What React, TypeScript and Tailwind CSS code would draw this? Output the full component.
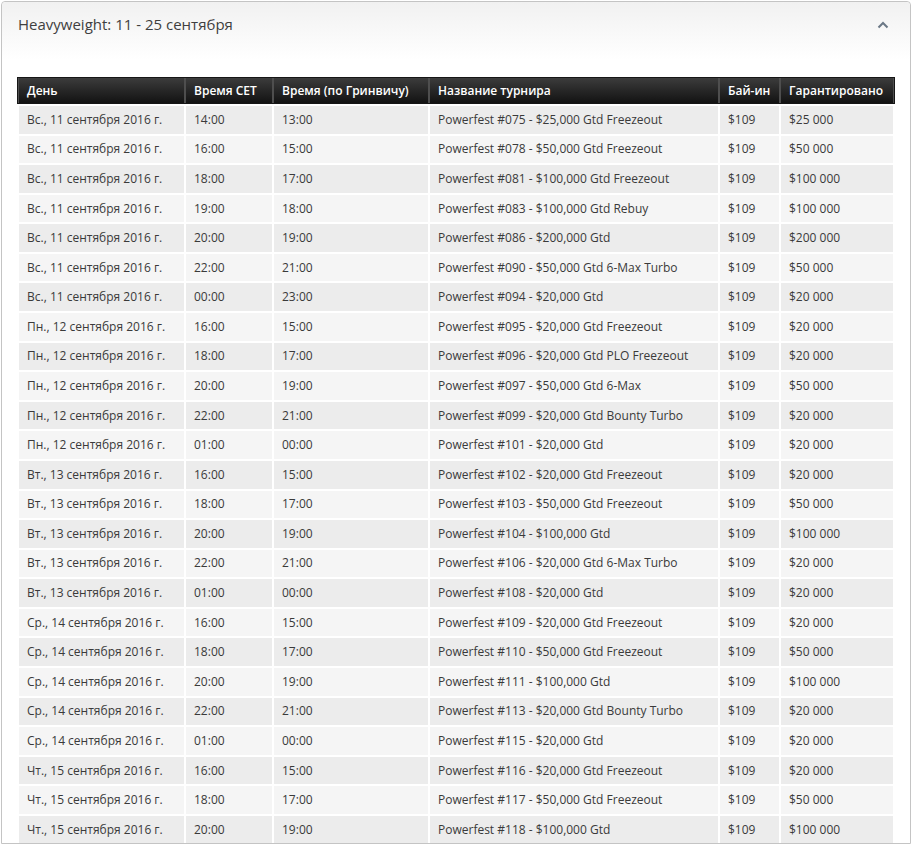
import React from "react";

const rows: [string, string, string, string, string][] = [
  ["Вс., 11 сентября 2016 г.", "14:00", "13:00", "Powerfest #075 - $25,000 Gtd Freezeout", "$25 000"],
  ["Вс., 11 сентября 2016 г.", "16:00", "15:00", "Powerfest #078 - $50,000 Gtd Freezeout", "$50 000"],
  ["Вс., 11 сентября 2016 г.", "18:00", "17:00", "Powerfest #081 - $100,000 Gtd Freezeout", "$100 000"],
  ["Вс., 11 сентября 2016 г.", "19:00", "18:00", "Powerfest #083 - $100,000 Gtd Rebuy", "$100 000"],
  ["Вс., 11 сентября 2016 г.", "20:00", "19:00", "Powerfest #086 - $200,000 Gtd", "$200 000"],
  ["Вс., 11 сентября 2016 г.", "22:00", "21:00", "Powerfest #090 - $50,000 Gtd 6-Max Turbo", "$50 000"],
  ["Вс., 11 сентября 2016 г.", "00:00", "23:00", "Powerfest #094 - $20,000 Gtd", "$20 000"],
  ["Пн., 12 сентября 2016 г.", "16:00", "15:00", "Powerfest #095 - $20,000 Gtd Freezeout", "$20 000"],
  ["Пн., 12 сентября 2016 г.", "18:00", "17:00", "Powerfest #096 - $20,000 Gtd PLO Freezeout", "$20 000"],
  ["Пн., 12 сентября 2016 г.", "20:00", "19:00", "Powerfest #097 - $50,000 Gtd 6-Max", "$50 000"],
  ["Пн., 12 сентября 2016 г.", "22:00", "21:00", "Powerfest #099 - $20,000 Gtd Bounty Turbo", "$20 000"],
  ["Пн., 12 сентября 2016 г.", "01:00", "00:00", "Powerfest #101 - $20,000 Gtd", "$20 000"],
  ["Вт., 13 сентября 2016 г.", "16:00", "15:00", "Powerfest #102 - $20,000 Gtd Freezeout", "$20 000"],
  ["Вт., 13 сентября 2016 г.", "18:00", "17:00", "Powerfest #103 - $50,000 Gtd Freezeout", "$50 000"],
  ["Вт., 13 сентября 2016 г.", "20:00", "19:00", "Powerfest #104 - $100,000 Gtd", "$100 000"],
  ["Вт., 13 сентября 2016 г.", "22:00", "21:00", "Powerfest #106 - $20,000 Gtd 6-Max Turbo", "$20 000"],
  ["Вт., 13 сентября 2016 г.", "01:00", "00:00", "Powerfest #108 - $20,000 Gtd", "$20 000"],
  ["Ср., 14 сентября 2016 г.", "16:00", "15:00", "Powerfest #109 - $20,000 Gtd Freezeout", "$20 000"],
  ["Ср., 14 сентября 2016 г.", "18:00", "17:00", "Powerfest #110 - $50,000 Gtd Freezeout", "$50 000"],
  ["Ср., 14 сентября 2016 г.", "20:00", "19:00", "Powerfest #111 - $100,000 Gtd", "$100 000"],
  ["Ср., 14 сентября 2016 г.", "22:00", "21:00", "Powerfest #113 - $20,000 Gtd Bounty Turbo", "$20 000"],
  ["Ср., 14 сентября 2016 г.", "01:00", "00:00", "Powerfest #115 - $20,000 Gtd", "$20 000"],
  ["Чт., 15 сентября 2016 г.", "16:00", "15:00", "Powerfest #116 - $20,000 Gtd Freezeout", "$20 000"],
  ["Чт., 15 сентября 2016 г.", "18:00", "17:00", "Powerfest #117 - $50,000 Gtd Freezeout", "$50 000"],
  ["Чт., 15 сентября 2016 г.", "20:00", "19:00", "Powerfest #118 - $100,000 Gtd", "$100 000"],
];

const headers = ["День", "Время CET", "Время (по Гринвичу)", "Название турнира", "Бай-ин", "Гарантировано"];
const cols = "grid grid-cols-[165px_86px_154px_288px_59px_112px] gap-x-[2px]";

export default function App() {
  return (
    <div className="bg-white min-h-screen p-[1px]" style={{ fontFamily: '"Open Sans", "DejaVu Sans", sans-serif' }}>
      <div className="border border-[#c4c4c4] rounded-t-[4px] bg-white">
        <div className="h-[58px] bg-gradient-to-b from-[#f1f1f1] to-white rounded-t-[4px] flex items-start justify-between pl-[16px] pr-[21px] pt-[11px]">
          <div className="text-[15px] text-[#3f3f3f] leading-[22px]">Heavyweight: 11 - 25 сентября</div>
          <svg width="12" height="8" viewBox="0 0 12 8" className="mt-[8px]">
            <polyline points="1.5,6.5 6,2 10.5,6.5" fill="none" stroke="#6b7886" strokeWidth="2" />
          </svg>
        </div>
        <div className="pl-[15px] pr-[14px] pt-[17px]">
          <div className="w-[878px]">
            <div className={`${cols} bg-[#4e4e4e] border border-[#161616] h-[27px] px-[1px]`}>
              {headers.map((h, i) => (
                <div
                  key={i}
                  className="bg-gradient-to-b from-[#3c3c3c] to-[#131313] text-white font-semibold text-[12px] flex items-center pl-[8px] whitespace-nowrap"
                >
                  {h}
                </div>
              ))}
            </div>
            <div className="px-[2px] pt-[2px] flex flex-col gap-y-[2px]">
              {rows.map((r, i) => (
                <div key={i} className={`${cols} h-[27.58px]`}>
                  {[r[0], r[1], r[2], r[3], "$109", r[4]].map((c, j) => (
                    <div
                      key={j}
                      className={`${i % 2 === 0 ? "bg-[#ececec]" : "bg-[#f5f5f5]"} text-[12px] text-[#3a3a3a] flex items-center pl-[8px] whitespace-nowrap`}
                    >
                      {c}
                    </div>
                  ))}
                </div>
              ))}
            </div>
          </div>
        </div>
      </div>
    </div>
  );
}
